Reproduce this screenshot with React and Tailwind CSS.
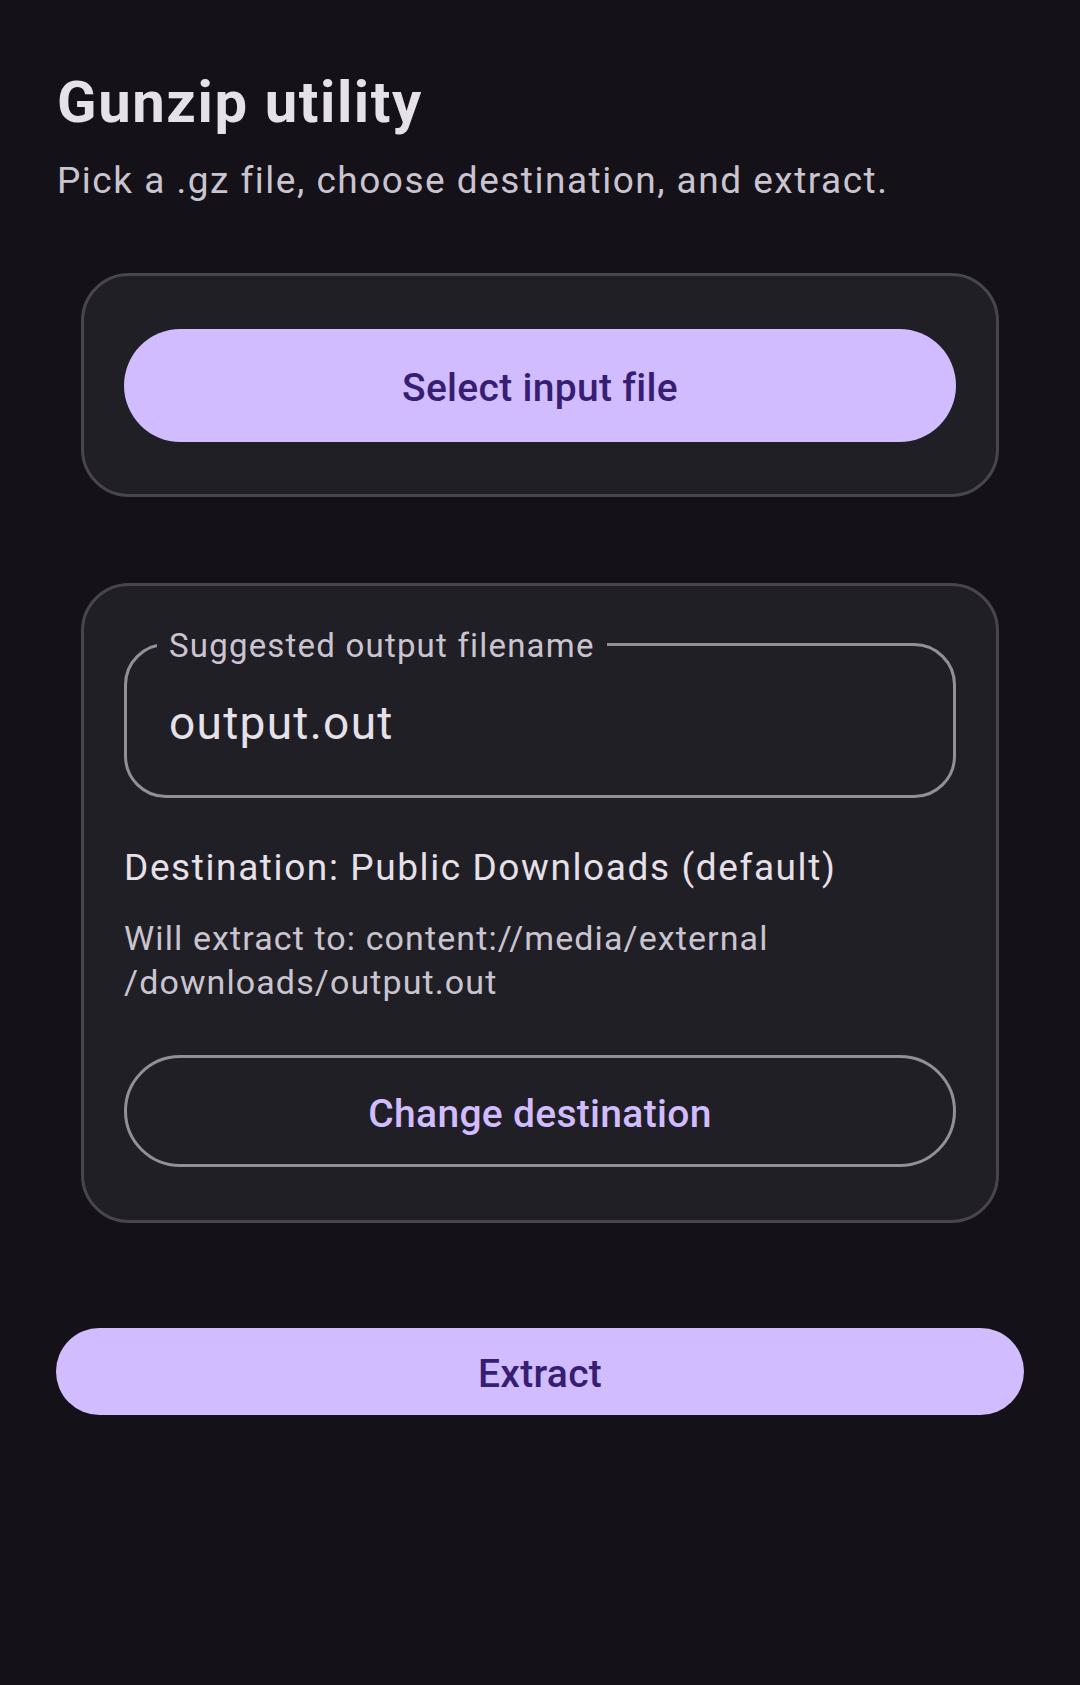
export default function App() {
  const font = { fontFamily: 'Roboto, "Noto Sans", sans-serif' };
  return (
    <div className="min-h-[1685px] w-[1080px] bg-[#141218] px-[56px] pt-[70px]" style={font}>
      <h1 className="text-[58px] leading-[64px] font-bold tracking-[1.6px] text-[#E6E0E9] pl-[1px]">Gunzip utility</h1>
      <p className="mt-[23px] text-[37px] leading-[48px] tracking-[1.5px] text-[#CAC4D0] pl-[1px]">
        Pick a .gz file, choose destination, and extract.
      </p>

      <div className="mt-[68px] px-[25px] flex flex-col gap-[86px]">
        <div className="rounded-[48px] border-[3px] border-[#49454F] bg-[#211F26] px-[40px] pt-[53px] pb-[52px]">
          <div className="h-[113px] rounded-full bg-[#D0BCFF] flex items-center justify-center pt-[6px] text-[39px] font-medium tracking-[0.3px] text-[#381E72]">
            Select input file
          </div>
        </div>

        <div className="rounded-[48px] border-[3px] border-[#49454F] bg-[#211F26] px-[40px] pt-[57px] pb-[53px]">
          <div className="relative h-[155px] rounded-[42px] border-[3px] border-[#938F99] flex items-center pl-[42px] pt-[4px]">
            <span className="absolute left-[30px] top-[-17px] bg-[#211F26] px-[12px] text-[33px] leading-[33px] tracking-[1.2px] text-[#CAC4D0]">
              Suggested output filename
            </span>
            <span className="text-[46px] leading-[46px] tracking-[1.3px] text-[#E6E0E9]">output.out</span>
          </div>

          <div className="mt-[46px] text-[37px] leading-[48px] tracking-[1.6px] text-[#E6E0E9]">
            Destination: Public Downloads (default)
          </div>
          <div className="mt-[24px] text-[34px] leading-[44px] tracking-[1.1px] text-[#CAC4D0]">
            <span className="block">Will extract to: content://media/external</span>
            <span className="block">/downloads/output.out</span>
          </div>

          <div className="mt-[51px] h-[112px] rounded-full border-[3px] border-[#938F99] flex items-center justify-center pt-[6px] text-[39px] font-medium tracking-[0.3px] text-[#D0BCFF]">
            Change destination
          </div>
        </div>
      </div>

      <div className="mt-[105px] h-[87px] rounded-full bg-[#D0BCFF] flex items-center justify-center pt-[6px] text-[39px] font-medium tracking-[0.3px] text-[#381E72]">
        Extract
      </div>
    </div>
  );
}
